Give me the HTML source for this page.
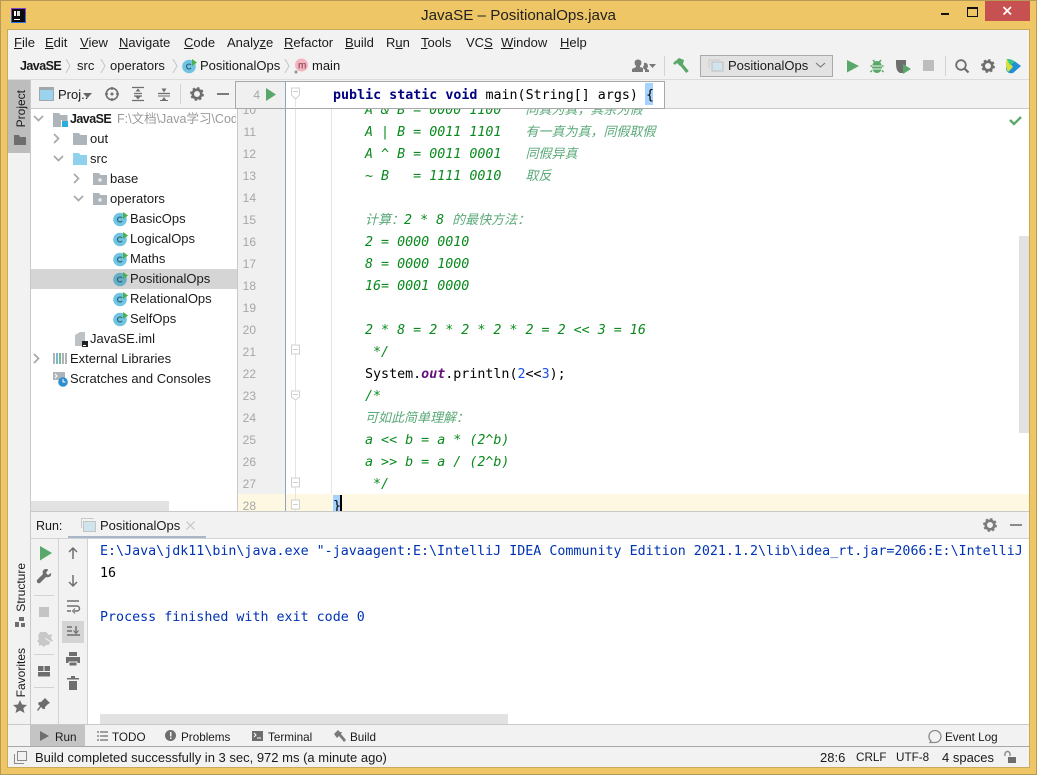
<!DOCTYPE html>
<html><head><meta charset="utf-8"><title>JavaSE – PositionalOps.java</title>
<style>
html,body{margin:0;padding:0;width:1037px;height:775px;overflow:hidden;background:#efc666}
body{position:relative;font-family:"Liberation Sans","Noto Sans CJK SC",sans-serif;font-size:13px;color:#1a1a1a}
.b{position:absolute}
.t{position:absolute;white-space:pre;line-height:20px;height:20px;margin-top:1px}
.t u{text-decoration:underline}
.s{font-size:11.7px}
.bd{font-weight:bold;font-size:12.5px;letter-spacing:-.55px}
.c{position:absolute;left:0;white-space:pre;line-height:22px;height:22px;margin-top:2px;font-family:"DejaVu Sans Mono","Noto Sans CJK SC",monospace;font-size:13.33px;color:#000}
.g{color:#0a8a1e;font-style:italic}
.g i{font-family:"Noto Sans CJK SC",sans-serif;font-size:13px;line-height:0;color:#5aa978;font-style:italic}
.n{position:absolute;left:236px;width:20px;text-align:right;font-family:"Liberation Sans",sans-serif;font-size:12px;line-height:22px;height:22px;margin-top:1px;color:#a6a6a6}
svg{position:absolute;overflow:visible}
.v{position:absolute;writing-mode:vertical-rl;transform:rotate(180deg);white-space:pre;line-height:14px;font-size:12px}
</style></head><body>

<!-- window frame -->
<div class="b" style="left:0;top:0;width:1035px;height:773px;border:1px solid #b79a55"></div>
<div class="b" style="left:8px;top:30px;width:1021px;height:737px;background:#f2f2f2;box-shadow:0 0 0 1px #c9a95a"></div>

<!-- title bar -->
<svg style="left:11px;top:8px" width="15" height="15"><rect width="15" height="15" fill="#2f6fe0"/><rect x="0" y="0" width="15" height="7" fill="#8a3fd0"/><rect x="1" y="1" width="13" height="13" fill="#0b0b0b"/><rect x="3" y="11" width="6" height="1" fill="#fff"/><rect x="3" y="3" width="2" height="5" fill="#fff"/><rect x="6" y="3" width="3" height="5" fill="#ddd"/></svg>
<div class="t" style="left:0;width:1037px;text-align:center;top:5px;font-size:15.2px;color:#222">JavaSE – PositionalOps.java</div>
<div class="b" style="left:941px;top:13px;width:8px;height:2px;background:#111"></div>
<div class="b" style="left:967px;top:7px;width:9px;height:7px;border:1px solid #111;border-top-width:2px"></div>
<div class="b" style="left:985px;top:1px;width:45px;height:20px;background:#c75050"></div>
<svg style="left:1002px;top:6px" width="11" height="10"><path d="M1.500 1L9 8.500M9 1L1.500 8.500" stroke="#fff" stroke-width="1.700"/></svg>

<!-- menu -->
<div class="t" style="left:14px;top:32px"><u>F</u>ile</div>
<div class="t" style="left:45px;top:32px"><u>E</u>dit</div>
<div class="t" style="left:80px;top:32px"><u>V</u>iew</div>
<div class="t" style="left:119px;top:32px"><u>N</u>avigate</div>
<div class="t" style="left:184px;top:32px"><u>C</u>ode</div>
<div class="t" style="left:227px;top:32px">Analy<u>z</u>e</div>
<div class="t" style="left:284px;top:32px"><u>R</u>efactor</div>
<div class="t" style="left:345px;top:32px"><u>B</u>uild</div>
<div class="t" style="left:386px;top:32px">R<u>u</u>n</div>
<div class="t" style="left:421px;top:32px"><u>T</u>ools</div>
<div class="t" style="left:466px;top:32px">VC<u>S</u></div>
<div class="t" style="left:501px;top:32px"><u>W</u>indow</div>
<div class="t" style="left:560px;top:32px"><u>H</u>elp</div>

<!-- breadcrumb -->
<div class="t bd" style="left:20px;top:55px">JavaSE</div>
<div class="t" style="left:77px;top:55px">src</div>
<div class="t" style="left:110px;top:55px">operators</div>
<div class="t" style="left:200px;top:55px">PositionalOps</div>
<div class="t" style="left:312px;top:55px">main</div>
<svg style="left:0;top:0" width="1037" height="80"><g fill="none" stroke="#c4c4c4"><path d="M66 59l4 7-4 7M101 59l4 7-4 7M173 59l4 7-4 7M285 59l4 7-4 7"/></g></svg>
<svg style="left:182px;top:58px" width="16" height="16"><circle cx="7" cy="8.500" r="6.800" fill="#6fc4e2"/><path d="M9 7a2.500 2.500 0 1 0 0 3" fill="none" stroke="#2d5d70" stroke-width="1.100"/><path d="M10 1l5 3.500-5 3.500z" fill="#4caf50"/></svg>
<svg style="left:293px;top:58px" width="16" height="16"><circle cx="8.500" cy="7" r="6.500" fill="#f4b4c0"/><text x="5" y="10.500" font-family="Liberation Sans" font-size="10" fill="#7a3344">m</text><path d="M3 12l2 2-2 2-2-2z" fill="#9a9a9a"/></svg>

<!-- toolbar right -->
<svg style="left:0;top:0" width="1037" height="110">
<path d="M632 72v-3l4-2v-1c-1-1-2-3-1-5 1-2 5-2 6 0 1 2 0 4-1 5v1l3 1v4zM645 72v-2l-2-2 0-1c1-1 1-3 1-4 2-1 4 1 4 3 0 1-1 2-1 3l2 1v2z" fill="#7a7a7a"/>
<path d="M649 64h7l-3.500 4z" fill="#777"/>
<rect x="664" y="56" width="1" height="20" fill="#d2d2d2"/>
<path d="M673 63l6-5 5 2-1 4-3 2-3-3-2 2z" fill="#59a869"/><path d="M680 63l7.500 9" stroke="#59a869" stroke-width="3.200"/>
<rect x="700.500" y="55.500" width="132" height="21" fill="#e2e2e2" stroke="#a9a9a9"/>
<rect x="712" y="62" width="11" height="9" fill="#cfe4ec" stroke="#c0c0c0"/><path d="M709 69v-8h11" transform="translate(0,-1)" fill="none" stroke="#c9c9c9"/>
<path d="M816 63l4.500 4 4.500-4" fill="none" stroke="#777" stroke-width="1.100"/>
<path d="M847 60l12 6-12 6.500z" fill="#59a869"/>
<path d="M873 60l2 2.500h4l2-2.500M872 66h-1.500M883.500 66h-1.500M872 70.500l-1.500 1.500M882 70.500l1.500 1.500" stroke="#59a869" stroke-width="1.500" fill="none"/><ellipse cx="877" cy="67" rx="5" ry="6" fill="#59a869"/><path d="M872 66h10M872 69h10" stroke="#eef5ef"/>
<path d="M896 60h10v5l-3 3v5h-3c-4-2-4-6-4-13z" fill="#6e6e6e"/><path d="M903 64l8 5-8 5z" fill="#59a869"/>
<rect x="923" y="60" width="11" height="11" fill="#bdbdbd"/>
<rect x="945" y="56" width="1" height="20" fill="#d2d2d2"/>
<circle cx="961" cy="65" r="4.800" fill="none" stroke="#6e6e6e" stroke-width="1.800"/><path d="M964.500 68.500l4 4" stroke="#6e6e6e" stroke-width="2.200"/>
<g id="gr"><circle cx="988" cy="66" r="4.300" fill="none" stroke="#6e6e6e" stroke-width="2.600"/><circle cx="988" cy="66" r="6" fill="none" stroke="#6e6e6e" stroke-width="1.800" stroke-dasharray="2.400 2.310"/></g>
<path d="M1007 59c6 0 10 4 14 7l-8 7c-4 1-7-1-7-5z" fill="#1f8fd6"/><path d="M1007 59c-2 3-1 10 1 13l5-5z" fill="#d7df3a"/><path d="M1007 59c3 0 6 1 8 3l-5 3z" fill="#35c48a"/>
</svg>
<div class="t" style="left:728px;top:55px">PositionalOps</div>

<div class="b" style="left:8px;top:79px;width:1021px;height:1px;background:#dcdcdc"></div>

<!-- left stripe -->
<div class="b" style="left:8px;top:80px;width:22px;height:73px;background:#bdbdbd"></div>
<div class="b" style="left:30px;top:80px;width:1px;height:645px;background:#c9c9c9"></div>
<div class="v" style="left:14px;top:90px">Project</div>
<svg style="left:14px;top:134px" width="12" height="12"><path d="M0 1h5l1 2h6v8H0z" fill="#6e6e6e"/></svg>
<div class="v" style="left:14px;top:563px">Structure</div>
<svg style="left:14px;top:616px" width="12" height="12"><rect x="5" y="1" width="5" height="4" fill="#6e6e6e"/><rect x="1" y="6" width="4" height="5" fill="#6e6e6e"/><rect x="7" y="7" width="4" height="4" fill="#6e6e6e"/></svg>
<div class="v" style="left:14px;top:648px">Favorites</div>
<svg style="left:13px;top:700px" width="14" height="13"><path d="M7 0l2 4.500 5 .5-3.700 3.200L11.500 13 7 10.500 2.500 13l1.200-4.800L0 5l5-.5z" fill="#6e6e6e"/></svg>

<!-- project panel header -->
<svg style="left:39px;top:87px" width="15" height="14"><rect x=".5" y=".5" width="14" height="13" fill="#9bd3ee" stroke="#9fa8ad"/><rect x="0" y="0" width="15" height="3" fill="#9fa8ad"/></svg>
<div class="t" style="left:58px;top:84px">Proj..</div>
<svg style="left:0;top:80px" width="240" height="30">
<path d="M83 13h9l-4.500 5z" fill="#666"/>
<circle cx="112" cy="14" r="5.800" fill="none" stroke="#6e6e6e" stroke-width="1.600"/><circle cx="112" cy="14" r="1.500" fill="#6e6e6e"/><path d="M112 7v3M112 18v3M105 14h3M116 14h3" stroke="#6e6e6e" stroke-width="1.400"/>
<path d="M132 7.500h12M132 20.500h12M134 13.500h8M134 16h8" stroke="#6e6e6e" stroke-width="1.300"/><path d="M138 8.500l-2.500 3h5zM138 19.500l-2.500-3h5z" fill="#6e6e6e"/>
<path d="M158 13.500h12" stroke="#6e6e6e" stroke-width="1.300"/><path d="M158 16h12M160 20.500h8" stroke="#6e6e6e" stroke-width="1.100"/><path d="M164 12.500l-2.500-4h5z" fill="#6e6e6e"/><path d="M164 17l-2.500 3.500h5z" fill="#6e6e6e"/>
<rect x="180" y="4" width="1" height="20" fill="#d2d2d2"/>
<circle cx="197" cy="14" r="4.300" fill="none" stroke="#6e6e6e" stroke-width="2.600"/><circle cx="197" cy="14" r="6" fill="none" stroke="#6e6e6e" stroke-width="1.800" stroke-dasharray="2.400 2.310"/>
<rect x="217" y="13" width="12" height="2" fill="#7a7a7a"/>
</svg>
<div class="b" style="left:30px;top:108px;width:999px;height:1px;background:#c9c9c9"></div>

<!-- project tree -->
<div class="b" style="left:31px;top:109px;width:206px;height:402px;background:#fff;overflow:hidden">
 <div class="b" style="left:0;top:160px;width:206px;height:20px;background:#d5d5d5"></div>
 <div class="b" style="left:0;top:392px;width:138px;height:10px;background:#e2e2e2"></div>
</div>
<svg style="left:0;top:100px" width="240" height="300">
<g fill="none" stroke="#a8a8a8" stroke-width="1.700">
<path d="M34 16l4.500 4.500 4.500-4.500"/>
<path d="M54 34l4.500 4.500-4.500 4.500"/>
<path d="M54 56l4.500 4.500 4.500-4.500"/>
<path d="M74 74l4.500 4.500-4.500 4.500"/>
<path d="M74 96l4.500 4.500 4.500-4.500"/>
<path d="M34 254l4.500 4.500-4.500 4.500"/>
</g>
<path d="M53 13h6l1.500 2h7v12h-14.500z" fill="#aeb5ba"/><rect x="62" y="21" width="6" height="6" fill="#2eaddc"/><rect x="61" y="20" width="1" height="7" fill="#fff"/>
<path d="M73 33h6l1.500 2h6.500v10h-14z" fill="#aeb5ba"/>
<path d="M73 53h6l1.500 2h6.500v10h-14z" fill="#8fd0ea"/>
<path d="M93 73h6l1.500 2h6.500v10h-14z" fill="#aeb5ba"/><circle cx="100" cy="80" r="1.700" fill="#eee"/>
<path d="M93 93h6l1.500 2h6.500v10h-14z" fill="#aeb5ba"/><circle cx="100" cy="100" r="1.700" fill="#eee"/>
<g id="ci">
<g transform="translate(113,112)"><circle cx="7" cy="7.500" r="6.800" fill="#6fc4e2"/><path d="M9 6a2.500 2.500 0 1 0 0 3" fill="none" stroke="#2d5d70" stroke-width="1.100"/><path d="M10 0l5 3.500-5 3.500z" fill="#4caf50"/></g>
<g transform="translate(113,132)"><circle cx="7" cy="7.500" r="6.800" fill="#6fc4e2"/><path d="M9 6a2.500 2.500 0 1 0 0 3" fill="none" stroke="#2d5d70" stroke-width="1.100"/><path d="M10 0l5 3.500-5 3.500z" fill="#4caf50"/></g>
<g transform="translate(113,152)"><circle cx="7" cy="7.500" r="6.800" fill="#6fc4e2"/><path d="M9 6a2.500 2.500 0 1 0 0 3" fill="none" stroke="#2d5d70" stroke-width="1.100"/><path d="M10 0l5 3.500-5 3.500z" fill="#4caf50"/></g>
<g transform="translate(113,172)"><circle cx="7" cy="7.500" r="6.800" fill="#65aec8"/><path d="M9 6a2.500 2.500 0 1 0 0 3" fill="none" stroke="#2d5d70" stroke-width="1.100"/><path d="M10 0l5 3.500-5 3.500z" fill="#4caf50"/></g>
<g transform="translate(113,192)"><circle cx="7" cy="7.500" r="6.800" fill="#6fc4e2"/><path d="M9 6a2.500 2.500 0 1 0 0 3" fill="none" stroke="#2d5d70" stroke-width="1.100"/><path d="M10 0l5 3.500-5 3.500z" fill="#4caf50"/></g>
<g transform="translate(113,212)"><circle cx="7" cy="7.500" r="6.800" fill="#6fc4e2"/><path d="M9 6a2.500 2.500 0 1 0 0 3" fill="none" stroke="#2d5d70" stroke-width="1.100"/><path d="M10 0l5 3.500-5 3.500z" fill="#4caf50"/></g>
</g>
<path d="M75 235l5-3h5v14H75z" fill="#bcc2c6"/><rect x="82" y="241" width="6" height="6" fill="#222"/><rect x="83" y="245" width="3" height="1" fill="#fff"/>
<rect x="53" y="253" width="2" height="11" fill="#aeb5ba"/><rect x="56" y="253" width="2" height="11" fill="#78b7d4"/><rect x="59" y="253" width="2" height="11" fill="#7cbb8a"/><rect x="62" y="253" width="2" height="11" fill="#aeb5ba"/><rect x="65" y="253" width="2" height="11" fill="#aeb5ba"/>
<path d="M53 272h12v8H53z" fill="#aeb5ba"/><path d="M55 274l2 2-2 2" fill="none" stroke="#fff"/><circle cx="63" cy="282" r="4.800" fill="#2e8fd0"/><path d="M63 279v3h2.500" fill="none" stroke="#fff"/>
</svg>
<div class="t bd" style="left:70px;top:108px">JavaSE</div>
<div class="b" style="left:117px;top:108px;width:119px;height:21px;overflow:hidden"><div class="t" style="left:0;top:0;color:#9a9a9a;font-size:12.5px">F:\文档\Java学习\Code</div></div>
<div class="t" style="left:90px;top:128px">out</div>
<div class="t" style="left:90px;top:148px">src</div>
<div class="t" style="left:110px;top:168px">base</div>
<div class="t" style="left:110px;top:188px">operators</div>
<div class="t" style="left:130px;top:208px">BasicOps</div>
<div class="t" style="left:130px;top:228px">LogicalOps</div>
<div class="t" style="left:130px;top:248px">Maths</div>
<div class="t" style="left:130px;top:268px">PositionalOps</div>
<div class="t" style="left:130px;top:288px">RelationalOps</div>
<div class="t" style="left:130px;top:308px">SelfOps</div>
<div class="t" style="left:90px;top:328px">JavaSE.iml</div>
<div class="t" style="left:70px;top:348px">External Libraries</div>
<div class="t" style="left:70px;top:368px">Scratches and Consoles</div>

<!-- editor -->
<div class="b" style="left:237px;top:109px;width:792px;height:402px;background:#fff;overflow:hidden">
 <div class="b" style="left:0;top:0;width:48px;height:402px;background:#f0f0f0"></div>
 <div class="b" style="left:0;top:385px;width:792px;height:17px;background:#fef8e3"></div>
 <div class="b" style="left:48px;top:0;width:1px;height:402px;background:#8ea3bf"></div>
 <div class="b" style="left:58px;top:0;width:1px;height:402px;background:#e4e4e4"></div>
 <div class="b" style="left:94px;top:0;width:1px;height:385px;background:#e4e4e4"></div>
 <div class="b" style="left:782px;top:127px;width:10px;height:197px;background:#e2e2e2"></div>
</div>
<div class="b" style="left:237px;top:109px;width:1px;height:402px;background:#c9c9c9"></div>

<div class="b" style="left:0;top:0;width:1037px;height:511px;overflow:hidden">
<div class="n" style="top:98px">10</div><div class="n" style="top:120px">11</div><div class="n" style="top:142px">12</div><div class="n" style="top:164px">13</div><div class="n" style="top:186px">14</div><div class="n" style="top:208px">15</div><div class="n" style="top:230px">16</div><div class="n" style="top:252px">17</div><div class="n" style="top:274px">18</div><div class="n" style="top:296px">19</div><div class="n" style="top:318px">20</div><div class="n" style="top:340px">21</div><div class="n" style="top:362px">22</div><div class="n" style="top:384px">23</div><div class="n" style="top:406px">24</div><div class="n" style="top:428px">25</div><div class="n" style="top:450px">26</div><div class="n" style="top:472px">27</div><div class="n" style="top:494px">28</div>

<div class="c g" style="left:365px;top:98px">A &amp; B = 0000 1100   <i>同真为真，其余为假</i></div>
<div class="c g" style="left:365px;top:120px">A | B = 0011 1101   <i>有一真为真，同假取假</i></div>
<div class="c g" style="left:365px;top:142px">A ^ B = 0011 0001   <i>同假异真</i></div>
<div class="c g" style="left:365px;top:164px">~ B   = 1111 0010   <i>取反</i></div>
<div class="c g" style="left:365px;top:208px"><i>计算：</i>2 * 8 <i>的最快方法：</i></div>
<div class="c g" style="left:365px;top:230px">2 = 0000 0010</div>
<div class="c g" style="left:365px;top:252px">8 = 0000 1000</div>
<div class="c g" style="left:365px;top:274px">16= 0001 0000</div>
<div class="c g" style="left:365px;top:318px">2 * 8 = 2 * 2 * 2 * 2 = 2 &lt;&lt; 3 = 16</div>
<div class="c g" style="left:365px;top:340px"> */</div>
<div class="c" style="left:365px;top:362px">System.<span style="color:#660e7a;font-style:italic;font-weight:bold">out</span>.println(<span style="color:#1750eb">2</span>&lt;&lt;<span style="color:#1750eb">3</span>);</div>
<div class="c g" style="left:365px;top:384px">/*</div>
<div class="c g" style="left:365px;top:406px"><i>可如此简单理解：</i></div>
<div class="c g" style="left:365px;top:428px">a &lt;&lt; b = a * (2^b)</div>
<div class="c g" style="left:365px;top:450px">a &gt;&gt; b = a / (2^b)</div>
<div class="c g" style="left:365px;top:472px"> */</div>
<div class="b" style="left:333px;top:495px;width:8px;height:16px;background:#a6d2ff"></div>
<div class="c" style="left:333px;top:494px">}</div>
<div class="b" style="left:340px;top:495px;width:2px;height:16px;background:#000"></div>

<svg style="left:0;top:0" width="1037" height="511"><g fill="#fff" stroke="#d0d0d0">
<path d="M291.500 345h8v9h-8z"/><path d="M293 349.500h5"/>
<path d="M291.500 391h8v6l-4 3-4-3z"/><path d="M293 394.500h5"/>
<path d="M291.500 478h8v9h-8z"/><path d="M293 482.500h5"/>
<path d="M291.500 500h8v9h-8z"/><path d="M293 504.500h5"/>
</g>
<path d="M1010 120l4 4 7-7" fill="none" stroke="#59a869" stroke-width="2.300"/>
</svg>
</div>

<!-- sticky header -->
<div class="b" style="left:235px;top:81px;width:428px;height:26px;background:#fff;border:1px solid #a8a8a8"></div>
<div class="b" style="left:236px;top:82px;width:49px;height:26px;background:#f0f0f0"></div>
<div class="b" style="left:285px;top:82px;width:1px;height:26px;background:#8ea3bf"></div>
<div class="n" style="left:236px;width:24px;top:83px;font-size:12px">4</div>
<svg style="left:266px;top:88px" width="11" height="13"><path d="M0 0l10 6.500L0 13z" fill="#59a869"/></svg>
<svg style="left:0;top:0" width="320" height="108"><path d="M291.500 88h8v7l-4 4-4-4z" fill="#fff" stroke="#d0d0d0"/><path d="M293 91.500h5" stroke="#d0d0d0"/><path d="M295.500 99v8" stroke="#e4e4e4"/></svg>
<div class="b" style="left:645px;top:83px;width:8px;height:22px;background:#a6d2ff"></div>
<div class="c" style="left:333px;top:83px"><b style="color:#000080">public static void</b> main(String[] args) {</div>

<!-- run panel -->
<div class="b" style="left:30px;top:511px;width:999px;height:1px;background:#c9c9c9"></div>
<div class="t" style="left:36px;top:515px;font-size:12.5px">Run:</div>
<svg style="left:81px;top:518px" width="15" height="14"><rect x="2.500" y="3.500" width="12" height="10" fill="#cfe4ec" stroke="#c4c4c4"/><path d="M.5 10V.5h12" fill="none" stroke="#c9c9c9"/></svg>
<div class="t" style="left:100px;top:515px">PositionalOps</div>
<svg style="left:186px;top:521px" width="9" height="9"><path d="M.5.500l8 8M8.500.500l-8 8" stroke="#c4c4c4" stroke-width="1.200"/></svg>
<div class="b" style="left:68px;top:536px;width:138px;height:3px;background:#a9b6c8"></div>
<div class="b" style="left:30px;top:538px;width:999px;height:1px;background:#d2d2d2"></div>
<svg style="left:0;top:510px" width="1037" height="30"><circle cx="990" cy="15" r="4.300" fill="none" stroke="#7a7a7a" stroke-width="2.600"/><circle cx="990" cy="15" r="6" fill="none" stroke="#7a7a7a" stroke-width="1.800" stroke-dasharray="2.400 2.310"/><rect x="1010" y="14" width="12" height="2" fill="#8a8a8a"/></svg>

<div class="b" style="left:88px;top:539px;width:941px;height:185px;background:#fff"></div>
<div class="b" style="left:58px;top:539px;width:1px;height:186px;background:#d2d2d2"></div>
<div class="b" style="left:87px;top:539px;width:1px;height:186px;background:#d2d2d2"></div>
<div class="b" style="left:62px;top:621px;width:22px;height:22px;background:#d4d4d4"></div>
<svg style="left:0;top:510px" width="90" height="215">
<path d="M40 36l12 7-12 7.500z" fill="#59a869"/>
<path d="M46 59c-3 0-4 3-3 5l-6 6c-1 2 1 4 3 3l6-6c3 1 6-1 5-4l-3 2-2-2 2-3c0-1-1-1-2-1z" fill="#6e6e6e"/>
<rect x="34" y="85" width="20" height="1" fill="#d2d2d2"/>
<rect x="39" y="97" width="10" height="10" fill="#c4c4c4"/>
<path d="M40 122h6l3 3 3-1-1 4 2 3-3 1-1 3h-3l-2 2-3-2-2 1v-3l-2-2 2-2-1-3z" fill="#c8c8c8"/><path d="M45 128l6 4" stroke="#f2f2f2"/>
<rect x="34" y="144" width="20" height="1" fill="#d2d2d2"/>
<rect x="38" y="156" width="5.500" height="5" fill="#6e6e6e"/><rect x="44.500" y="156" width="5.500" height="5" fill="#6e6e6e"/><rect x="38" y="162" width="12" height="4.500" fill="#6e6e6e"/>
<rect x="34" y="177" width="20" height="1" fill="#d2d2d2"/>
<path d="M45 188l5 5-2 1-3 3 0 2-2 0-2-2-3 4-1-1 3-4-2-2 1-2 2 0 3-3z" fill="#6e6e6e"/>
<path d="M73 38v11M69 42l4-4 4 4" fill="none" stroke="#6e6e6e" stroke-width="1.500"/>
<path d="M73 65v11M69 72l4 4 4-4" fill="none" stroke="#6e6e6e" stroke-width="1.500"/>
<path d="M67 91h12M67 96h10a2.500 2.500 0 0 1 0 5h-3M67 101h4" fill="none" stroke="#6e6e6e" stroke-width="1.400"/><path d="M75 98.500l-2.500 2.500 2.500 2.500" fill="none" stroke="#6e6e6e"/>
<path d="M67 117h5M67 121h5M67 125h13M76 116v7" stroke="#6e6e6e" stroke-width="1.400" fill="none"/><path d="M73.500 120.500l2.500 3 2.500-3" fill="none" stroke="#6e6e6e"/>
<rect x="69" y="142" width="8" height="4" fill="#6e6e6e"/><rect x="66" y="147" width="14" height="6" fill="#6e6e6e"/><rect x="69" y="152" width="8" height="4" fill="#6e6e6e" stroke="#f2f2f2"/>
<rect x="67" y="168" width="12" height="1.500" fill="#6e6e6e"/><rect x="71" y="166" width="4" height="2" fill="#6e6e6e"/><rect x="69" y="171" width="8" height="9" fill="#6e6e6e"/>
</svg>

<div class="b" style="left:88px;top:539px;width:934px;height:186px;overflow:hidden">
 <div class="c" style="left:12px;top:0px;color:#0033b3">E:\Java\jdk11\bin\java.exe "-javaagent:E:\IntelliJ IDEA Community Edition 2021.1.2\lib\idea_rt.jar=2066:E:\IntelliJ</div>
 <div class="c" style="left:12px;top:22px">16</div>
 <div class="c" style="left:12px;top:66px;color:#0033b3">Process finished with exit code 0</div>
 <div class="b" style="left:12px;top:175px;width:408px;height:10px;background:#e2e2e2"></div>
</div>

<!-- bottom tool bar -->
<div class="b" style="left:8px;top:724px;width:1021px;height:1px;background:#c9c9c9"></div>
<div class="b" style="left:30px;top:725px;width:55px;height:21px;background:#c4c4c4"></div>
<svg style="left:0;top:725px" width="1037" height="22">
<path d="M40 6l9 5-9 5z" fill="#6e6e6e"/>
<path d="M97 7h2M97 11h2M97 15h2M100 7h8M100 11h8M100 15h8" stroke="#6e6e6e" stroke-width="1.200"/>
<circle cx="170.500" cy="10.500" r="5.500" fill="#6e6e6e"/><rect x="170" y="7" width="1.500" height="4.500" fill="#f2f2f2"/><rect x="170" y="12.500" width="1.500" height="1.500" fill="#f2f2f2"/>
<rect x="252" y="6" width="11" height="10" fill="#6e6e6e"/><path d="M254 8l2 2-2 2" fill="none" stroke="#fff"/><path d="M257 13h4" stroke="#fff"/>
<path d="M334 9l4-4 2 2 2 0-1 2 5 6-2 2-5-6-2 2z" fill="#7a7a7a"/>
<path d="M930 15a6 6 0 1 1 4 1.500h-5z" transform="translate(1,1)" fill="none" stroke="#8a8a8a" stroke-width="1.300"/>
</svg>
<div class="t s" style="left:55px;top:727px">Run</div>
<div class="t s" style="left:112px;top:727px">TODO</div>
<div class="t s" style="left:181px;top:727px">Problems</div>
<div class="t s" style="left:268px;top:727px">Terminal</div>
<div class="t s" style="left:350px;top:727px">Build</div>
<div class="t s" style="left:945px;top:727px">Event Log</div>

<!-- status bar -->
<div class="b" style="left:8px;top:746px;width:1021px;height:1px;background:#a8a8a8"></div>
<svg style="left:14px;top:751px" width="13" height="13"><path d="M3.500.500h9v9h-9zM.5 3v9.500H10" fill="none" stroke="#8a8a8a"/></svg>
<div class="t" style="left:35px;top:747px">Build completed successfully in 3 sec, 972 ms (a minute ago)</div>
<div class="t" style="left:820px;top:747px">28:6</div>
<div class="t s" style="left:856px;top:747px">CRLF</div>
<div class="t s" style="left:896px;top:747px">UTF-8</div>
<div class="t" style="left:942px;top:747px">4 spaces</div>
<svg style="left:1004px;top:751px" width="13" height="12"><path d="M1 5V3a2.500 2.500 0 0 1 5 0v2" fill="none" stroke="#8a8a8a" stroke-width="1.400"/><rect x="4" y="6" width="8" height="6" fill="#6e6e6e"/></svg>
</body></html>
